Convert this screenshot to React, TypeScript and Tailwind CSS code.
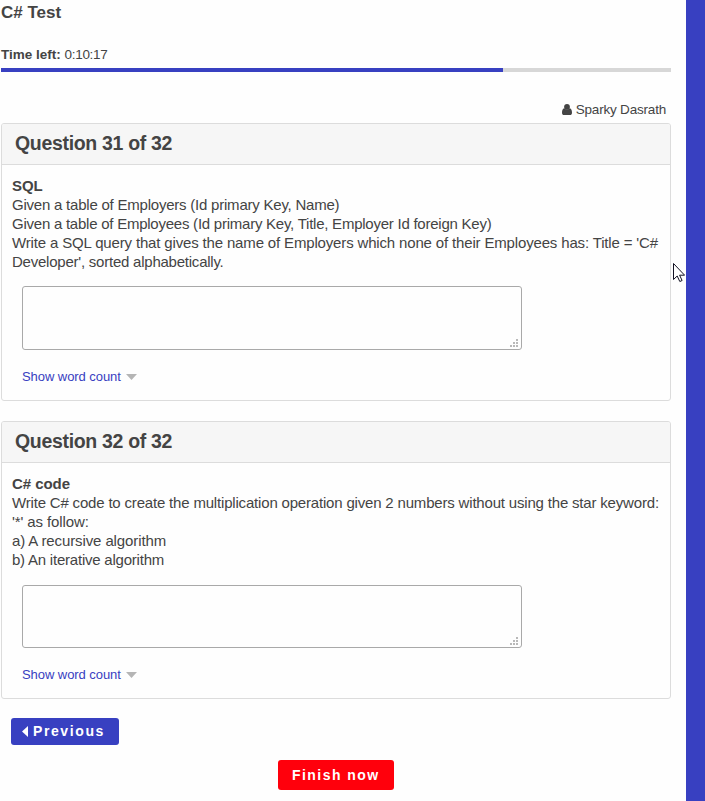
import React from 'react';

type Question = {
  number: number;
  title: string;
  answerBox: string;
  lines: { text: string; spacing: string }[];
};

const questions: Question[] = [
  {
    number: 31,
    title: 'SQL',
    answerBox: 'mt-[15px] h-16',
    lines: [
      { text: 'Given a table of Employers (Id primary Key, Name)', spacing: 'tracking-[-0.22px]' },
      { text: 'Given a table of Employees (Id primary Key, Title, Employer Id foreign Key)', spacing: 'tracking-[-0.24px]' },
      { text: "Write a SQL query that gives the name of Employers which none of their Employees has: Title = 'C#", spacing: 'tracking-[-0.157px]' },
      { text: "Developer', sorted alphabetically.", spacing: 'tracking-[-0.23px]' },
    ],
  },
  {
    number: 32,
    title: 'C# code',
    answerBox: 'mt-4 h-[63px]',
    lines: [
      { text: 'Write C# code to create the multiplication operation given 2 numbers without using the star keyword:', spacing: 'tracking-[-0.182px]' },
      { text: "'*' as follow:", spacing: 'tracking-[-0.1px]' },
      { text: 'a) A recursive algorithm', spacing: 'tracking-[-0.11px]' },
      { text: 'b) An iterative algorithm', spacing: 'tracking-[-0.22px]' },
    ],
  },
];

function ResizeGrip() {
  return (
    <svg className="h-2 w-2" viewBox="0 0 8 8" fill="#b9b9b9" shapeRendering="crispEdges">
      <path d="M6 0h2v2H6zM3 3h2v2H3zM6 3h2v2H6zM0 6h2v2H0zM3 6h2v2H3zM6 6h2v2H6z" />
    </svg>
  );
}

function QuestionCard({ question }: { question: Question }) {
  return (
    <section className="h-[278px] overflow-hidden rounded-[3px] border border-[#dcdcdc]">
      <h2 className="flex h-[41px] items-center border-b border-[#dcdcdc] bg-[#f6f6f6] pb-[2px] pl-[13px] text-[19.500px] font-bold leading-6 tracking-[-0.32px]">
        Question {question.number} of 32
      </h2>
      <div className="whitespace-nowrap pl-2.5 pt-[11px] text-[15px] leading-[19px]">
        <h3 className="font-bold tracking-[-0.05px]">{question.title}</h3>
        {question.lines.map((line) => (
          <p key={line.text} className={line.spacing}>
            {line.text}
          </p>
        ))}
      </div>
      <div
        className={`ml-5 flex w-[500px] items-end justify-end rounded-[3px] border border-[#a9a9a9] pb-0.5 pr-[3px] ${question.answerBox}`}
      >
        <ResizeGrip />
      </div>
      <div className="ml-5 mt-[18px] flex items-center text-[13px] leading-[18px] tracking-[-0.06px] text-[#3840c1]">
        <span>Show word count</span>
        <svg className="ml-[5px] h-1.5 w-[11px]" viewBox="0 0 11 6" fill="#b5b5b5">
          <path d="M0 0h11L5.500 6z" />
        </svg>
      </div>
    </section>
  );
}

export default function App() {
  return (
    <div className="relative flex h-[801px] w-[705px] overflow-hidden bg-[#fefefe] font-['Liberation_Sans',Arial,sans-serif] text-[#444444]">
      <main className="flex w-[686px] flex-col pl-px pr-[15px]">
        <h1 className="mt-[3px] text-[17px] font-bold leading-5">C# Test</h1>
        <p className="mt-[23px] text-[13.500px] leading-[18px]">
          <b>Time left:</b> <span className="tracking-[-0.3px]">0:10:17</span>
        </p>
        <div className="mt-1 h-1 bg-[#d7d7d7]">
          <div className="h-full w-[502px] bg-[#3840c1]" />
        </div>
        <div className="mt-7 flex h-[19px] items-center justify-end pr-[5px] text-[13.500px] tracking-[-0.2px]">
          <svg className="mr-1 h-[11px] w-2.5" viewBox="0 0 10 11" fill="#444444">
            <circle cx="5" cy="2.900" r="2.900" />
            <path d="M2.200 4.300C.7 4.600 0 6.500 0 8.700 0 10.100.8 11 2 11h6c1.200 0 2-.9 2-2.300 0-2.200-.7-4.100-2.200-4.400a3.800 3.800 0 0 1-5.600 0z" />
          </svg>
          <span className="pt-px">Sparky Dasrath</span>
        </div>
        <div className="mt-1 flex flex-col gap-5">
          {questions.map((question) => (
            <QuestionCard key={question.number} question={question} />
          ))}
        </div>
        <button className="ml-2.5 mt-[19px] flex h-[27px] w-[108px] items-center rounded-[3px] bg-[#3840c1] pl-[11px] text-[14px] font-bold tracking-[1.600px] text-white">
          <svg className="mr-[5px] h-[11px] w-1.5" viewBox="0 0 6 11" fill="currentColor">
            <path d="M6 0v11L0 5.500z" />
          </svg>
          Previous
        </button>
        <button className="ml-[277px] mt-[15px] flex h-[30px] w-[116px] items-center rounded-[3px] bg-[#ff000c] pl-3.5 text-[14px] font-bold tracking-[1.450px] text-white">
          Finish now
        </button>
      </main>
      <aside className="w-[19px] bg-[#3840c1]" />
      <svg className="absolute left-[673px] top-[262px] h-[21px] w-3" viewBox="0 0 12 21" fill="#ffffff" stroke="#111122">
        <path d="M.5 1.500v16l3.700-3.500 2.600 5.500 2.300-1-2.500-5.300h5z" />
      </svg>
    </div>
  );
}
